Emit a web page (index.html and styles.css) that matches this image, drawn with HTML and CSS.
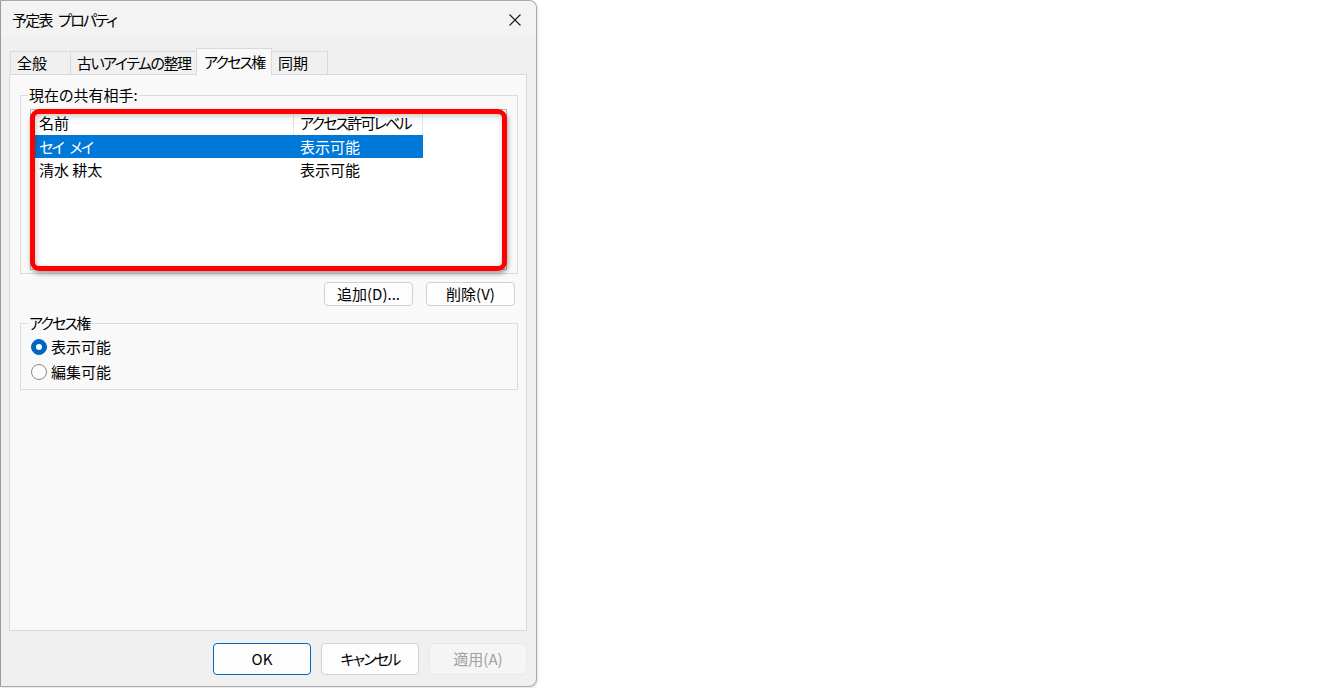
FILE: index.html
```html
<!DOCTYPE html>
<html lang="ja">
<head>
<meta charset="utf-8">
<title>予定表 プロパティ</title>
<link rel="stylesheet" href="styles.css">
</head>
<body>
<div class="dialog">
  <div class="titlebar">
    <span class="title cond">予定表 プロパティ</span>
    <span class="close" aria-label="閉じる">
      <svg width="12" height="12" viewBox="0 0 12 12"><path d="M0.5 0.5 L11.5 11.5 M11.5 0.5 L0.5 11.5" stroke="#1b1b1b" stroke-width="1.1" fill="none"/></svg>
    </span>
  </div>
  <div class="tabs">
    <div class="tab tab-general">全般</div>
    <div class="tab tab-cleanup cond-lite">古いアイテムの整理</div>
    <div class="tab tab-access active cond">アクセス権</div>
    <div class="tab tab-sync">同期</div>
  </div>
  <div class="panel">
    <fieldset class="group">
      <legend class="group-label">現在の共有相手:</legend>
      <div class="listview">
        <div class="lv-header">
          <div class="lv-cell c1 hdr">名前</div>
          <div class="lv-cell c2 hdr cond">アクセス許可レベル</div>
        </div>
        <div class="lv-row selected">
          <div class="lv-cell c1 cond">セイ メイ</div>
          <div class="lv-cell c2">表示可能</div>
        </div>
        <div class="lv-row">
          <div class="lv-cell c1">清水 耕太</div>
          <div class="lv-cell c2">表示可能</div>
        </div>
      </div>
    </fieldset>
    <div class="btn-row">
      <button class="btn small">追加(D)...</button>
      <button class="btn small">削除(V)</button>
    </div>
    <fieldset class="group group-access">
      <legend class="group-label cond">アクセス権</legend>
      <div class="radios">
        <div class="radio"><span class="dot checked"></span><span>表示可能</span></div>
        <div class="radio"><span class="dot"></span><span>編集可能</span></div>
      </div>
    </fieldset>
  </div>
  <div class="footer">
    <button class="btn big default">OK</button>
    <button class="btn big cond">キャンセル</button>
    <button class="btn big disabled">適用(A)</button>
  </div>
</div>
<div class="annotation"></div>
</body>
</html>
```

FILE: styles.css
```css
* { box-sizing: border-box; }
html, body { margin: 0; padding: 0; background: #ffffff; }
body {
  font-family: "Noto Sans CJK JP", "Noto Sans", sans-serif;
  font-size: 15px;
  line-height: 20px;
  color: #000;
  font-feature-settings: "palt" 1;
  position: relative;
  width: 1344px;
  height: 688px;
  overflow: hidden;
}

.cond { letter-spacing: -1.8px; word-spacing: 5px; }
.cond-lite { letter-spacing: -1.5px; }

.dialog {
  width: 537px;
  height: 687px;
  border: 1px solid #a9a9a9;
  border-left-color: #9a9a9a;
  border-radius: 0 8px 8px 0;
  background: #f0f0f0;
  display: flex;
  flex-direction: column;
  overflow: hidden;
  box-shadow: 1px 1px 3px rgba(0,0,0,0.12);
}

.titlebar {
  flex: none;
  height: 37px;
  background: #f3f3f3;
  display: flex;
  align-items: center;
  justify-content: space-between;
  padding: 0 15px 0 11px;
}
.title { white-space: nowrap; }
.close { display: flex; width: 12px; height: 12px; }

.tabs {
  flex: none;
  margin-top: 10px;
  height: 26px;
  padding-left: 9px;
  display: flex;
  align-items: flex-end;
  position: relative;
  z-index: 1;
}
.tab {
  height: 23px;
  border: 1px solid #d9d9d9;
  border-bottom: none;
  background: #f0f0f0;
  padding-left: 6px;
  line-height: 22px;
  white-space: nowrap;
  margin-right: -1px;
  overflow: hidden;
}
.tab.active {
  height: 27px;
  margin-bottom: -1px;
  background: #f9f9f9;
  padding-left: 7px;
  line-height: 26px;
  position: relative;
  z-index: 2;
}
.tab-general { width: 61px; }
.tab-cleanup { width: 127px; }
.tab-access { width: 76px; }
.tab-sync { width: 57px; }

.panel {
  flex: none;
  margin-left: 8px;
  width: 518px;
  height: 557px;
  border: 1px solid #d9d9d9;
  background: #f9f9f9;
  padding: 10px 8px 0 10px;
}

.group {
  margin: 0;
  padding: 0;
  border: 1px solid #dcdcdc;
  min-width: 0;
}
.group-label {
  padding: 0 1px;
  margin-left: 7px;
  line-height: 20px;
}

.listview {
  margin: 4px 10px 3px 9px;
  height: 161px;
  background: #fff;
  border: 1px solid #b5b5b5;
}
.lv-header { display: flex; height: 25px; }
.lv-row { display: flex; height: 23px; width: 392px; }
.lv-cell { white-space: nowrap; line-height: 23px; }
.lv-cell.hdr { line-height: 25px; border-right: 1px solid #e5e5e5; }
.c1 { width: 263px; padding-left: 8px; }
.c2 { width: 129px; padding-left: 6px; }
.lv-row.selected { background: #0078d7; color: #fff; }

.btn-row {
  display: flex;
  justify-content: flex-end;
  gap: 13px;
  margin-top: 8px;
  padding-right: 3px;
}
.btn {
  font: inherit;
  font-feature-settings: "palt" 1;
  color: #000;
  background: #fdfdfd;
  border: 1px solid #d0d0d0;
  border-radius: 4px;
  padding: 0;
  margin: 0;
}
.btn.small { width: 89px; height: 24px; line-height: 22px; }
.btn.big { width: 98px; height: 32px; line-height: 30px; }
.btn.default { border-color: #0067c0; }
.btn.disabled { background: #f5f5f5; border-color: #e8e8e8; color: #a0a0a0; }

.group-access { margin-top: 7px; }
.radios { margin: 1px 0 5px 10px; }
.radio { display: flex; align-items: center; height: 25px; gap: 4px; }
.dot {
  width: 16px;
  height: 16px;
  border-radius: 50%;
  border: 1px solid #8a8a8a;
  background: #fbfbfb;
  flex: none;
  display: flex;
  align-items: center;
  justify-content: center;
}
.dot.checked { background: #0067c0; border-color: #0067c0; }
.dot.checked::after {
  content: "";
  width: 6px;
  height: 6px;
  border-radius: 50%;
  background: #fff;
}

.footer {
  flex: none;
  display: flex;
  justify-content: flex-end;
  gap: 10px;
  padding: 12px 9px 0 0;
}

.annotation {
  position: absolute;
  left: 30px;
  top: 109px;
  width: 477px;
  height: 162px;
  border: 5px solid #ff0000;
  border-radius: 9px;
  box-shadow: 1px 3px 5px rgba(0,0,0,0.35), inset 1px 2px 6px rgba(0,0,0,0.22);
}
```
